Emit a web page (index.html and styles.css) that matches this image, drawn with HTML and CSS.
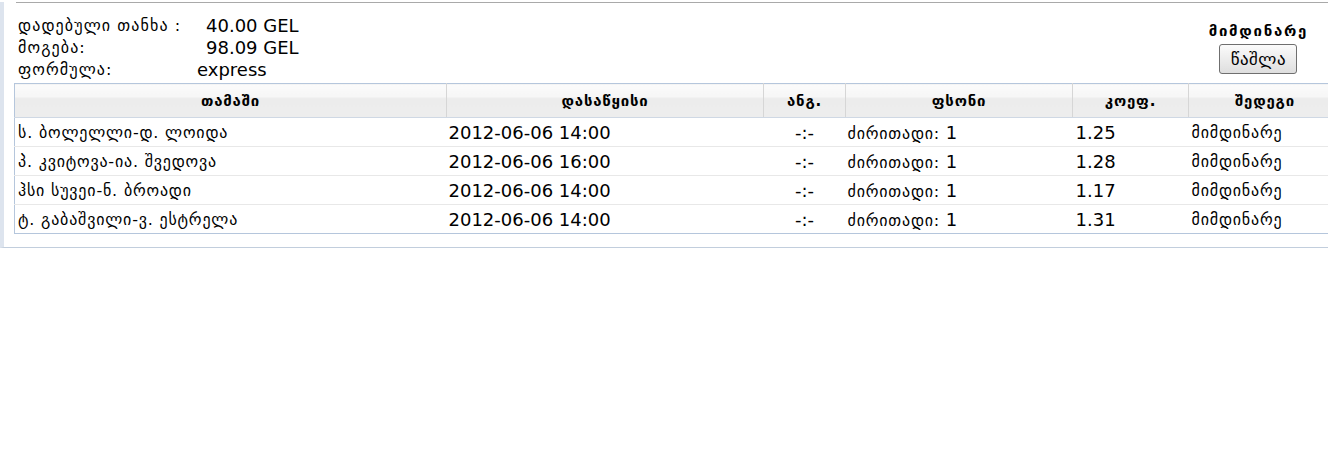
FILE: index.html
```html
<!DOCTYPE html>
<html lang="ka">
<head>
  <meta charset="UTF-8" />
  <title>ბილეთი</title>
  <link rel="stylesheet" href="styles.css">
</head>
<body>
  <div class="frame">
    <div class="topline"></div>

    <div class="summary">
      <div class="info">
        <div class="label">დადებული თანხა :</div>
        <div class="value money">40.00 GEL</div>
        <div class="label">მოგება:</div>
        <div class="value money">98.09 GEL</div>
        <div class="label">ფორმულა:</div>
        <div class="value">express</div>
      </div>

      <div class="status">
        <div class="status-title">მიმდინარე</div>
        <button class="delete-btn">წაშლა</button>
      </div>
    </div>

    <table class="bets">
      <thead>
        <tr>
          <th class="c-game">თამაში</th>
          <th class="c-start">დასაწყისი</th>
          <th class="c-score">ანგ.</th>
          <th class="c-bet">ფსონი</th>
          <th class="c-odds">კოეფ.</th>
          <th class="c-result">შედეგი</th>
        </tr>
      </thead>
      <tbody>
        <tr>
          <td class="ka">ს. ბოლელლი-დ. ლოიდა</td>
          <td>2012-06-06 14:00</td>
          <td class="score">-:-</td>
          <td><span class="ka">ძირითადი:</span> 1</td>
          <td>1.25</td>
          <td class="ka">მიმდინარე</td>
        </tr>
        <tr>
          <td class="ka">პ. კვიტოვა-ია. შვედოვა</td>
          <td>2012-06-06 16:00</td>
          <td class="score">-:-</td>
          <td><span class="ka">ძირითადი:</span> 1</td>
          <td>1.28</td>
          <td class="ka">მიმდინარე</td>
        </tr>
        <tr>
          <td class="ka">ჰსი სუვეი-ნ. ბროადი</td>
          <td>2012-06-06 14:00</td>
          <td class="score">-:-</td>
          <td><span class="ka">ძირითადი:</span> 1</td>
          <td>1.17</td>
          <td class="ka">მიმდინარე</td>
        </tr>
        <tr>
          <td class="ka">ტ. გაბაშვილი-ვ. ესტრელა</td>
          <td>2012-06-06 14:00</td>
          <td class="score">-:-</td>
          <td><span class="ka">ძირითადი:</span> 1</td>
          <td>1.31</td>
          <td class="ka">მიმდინარე</td>
        </tr>
      </tbody>
    </table>
  </div>
</body>
</html>
```

FILE: styles.css
```css
html, body {
  margin: 0;
  overflow: hidden;
  background-color: #fff;
}

body {
  font-family: 'DejaVu Sans', Verdana, sans-serif;
  font-size: 18px;
  color: #000;
}

.frame {
  width: 1328px;
  height: 233px;
  padding: 0 0 12px 10px;
  border-left: 4px solid #dde4ee;
  border-bottom: 1px solid #c2cedd;
}

.topline {
  height: 1px;
  margin: 2px 0 0 2px;
  background-color: #a9a9a9;
}

.summary {
  display: flex;
  justify-content: space-between;
  align-items: flex-start;
  margin-top: 12px;
  padding-left: 4px;
}

.info {
  display: grid;
  grid-template-columns: 179px auto;
  line-height: 22px;
}

.label {
  font-size: 16px;
  letter-spacing: 1.1px;
}

.money {
  padding-left: 9px;
}

.status {
  display: flex;
  flex-direction: column;
  align-items: center;
  margin-right: 34px;
  padding-top: 6px;
}

.status-title {
  font-weight: bold;
  font-size: 15px;
  letter-spacing: 1.7px;
  line-height: 20px;
}

.delete-btn {
  margin-top: 3px;
  width: 78px;
  height: 30px;
  padding: 0;
  font-family: 'DejaVu Sans', sans-serif;
  font-size: 17px;
  letter-spacing: 0.5px;
  border: 1px solid #6f6f6f;
  border-radius: 3px;
  background: linear-gradient(#fbfbfb, #dedede);
  color: #000;
}

.bets {
  width: 1328px;
  margin-top: 2px;
  border-collapse: collapse;
  border: 1px solid #b5c6dc;
  table-layout: fixed;
}

.bets th {
  height: 33px;
  padding: 0;
  font-size: 15px;
  font-weight: bold;
  letter-spacing: 0.8px;
  text-align: center;
  background: linear-gradient(#fbfbfb 0, #f6f6f6 40%, #ececec 41%, #ededed 100%);
  border-left: 1px solid #d6d6d6;
  border-bottom: 1px solid #cfd8e4;
}

.bets th:first-child {
  border-left: none;
}

.c-game { width: 431px; }
.c-start { width: 316px; }
.c-score { width: 81px; }
.c-bet { width: 226px; }
.c-odds { width: 115px; }

.bets td {
  height: 28px;
  padding: 0 3px;
  white-space: nowrap;
  border-bottom: 1px solid #e8e8e8;
}

.bets td:nth-child(2),
.bets td:nth-child(4) {
  padding-left: 2px;
}

.bets tbody tr:last-child td {
  border-bottom: none;
}

.ka {
  font-size: 16px;
  letter-spacing: 0.8px;
}

.score {
  text-align: center;
}
```
